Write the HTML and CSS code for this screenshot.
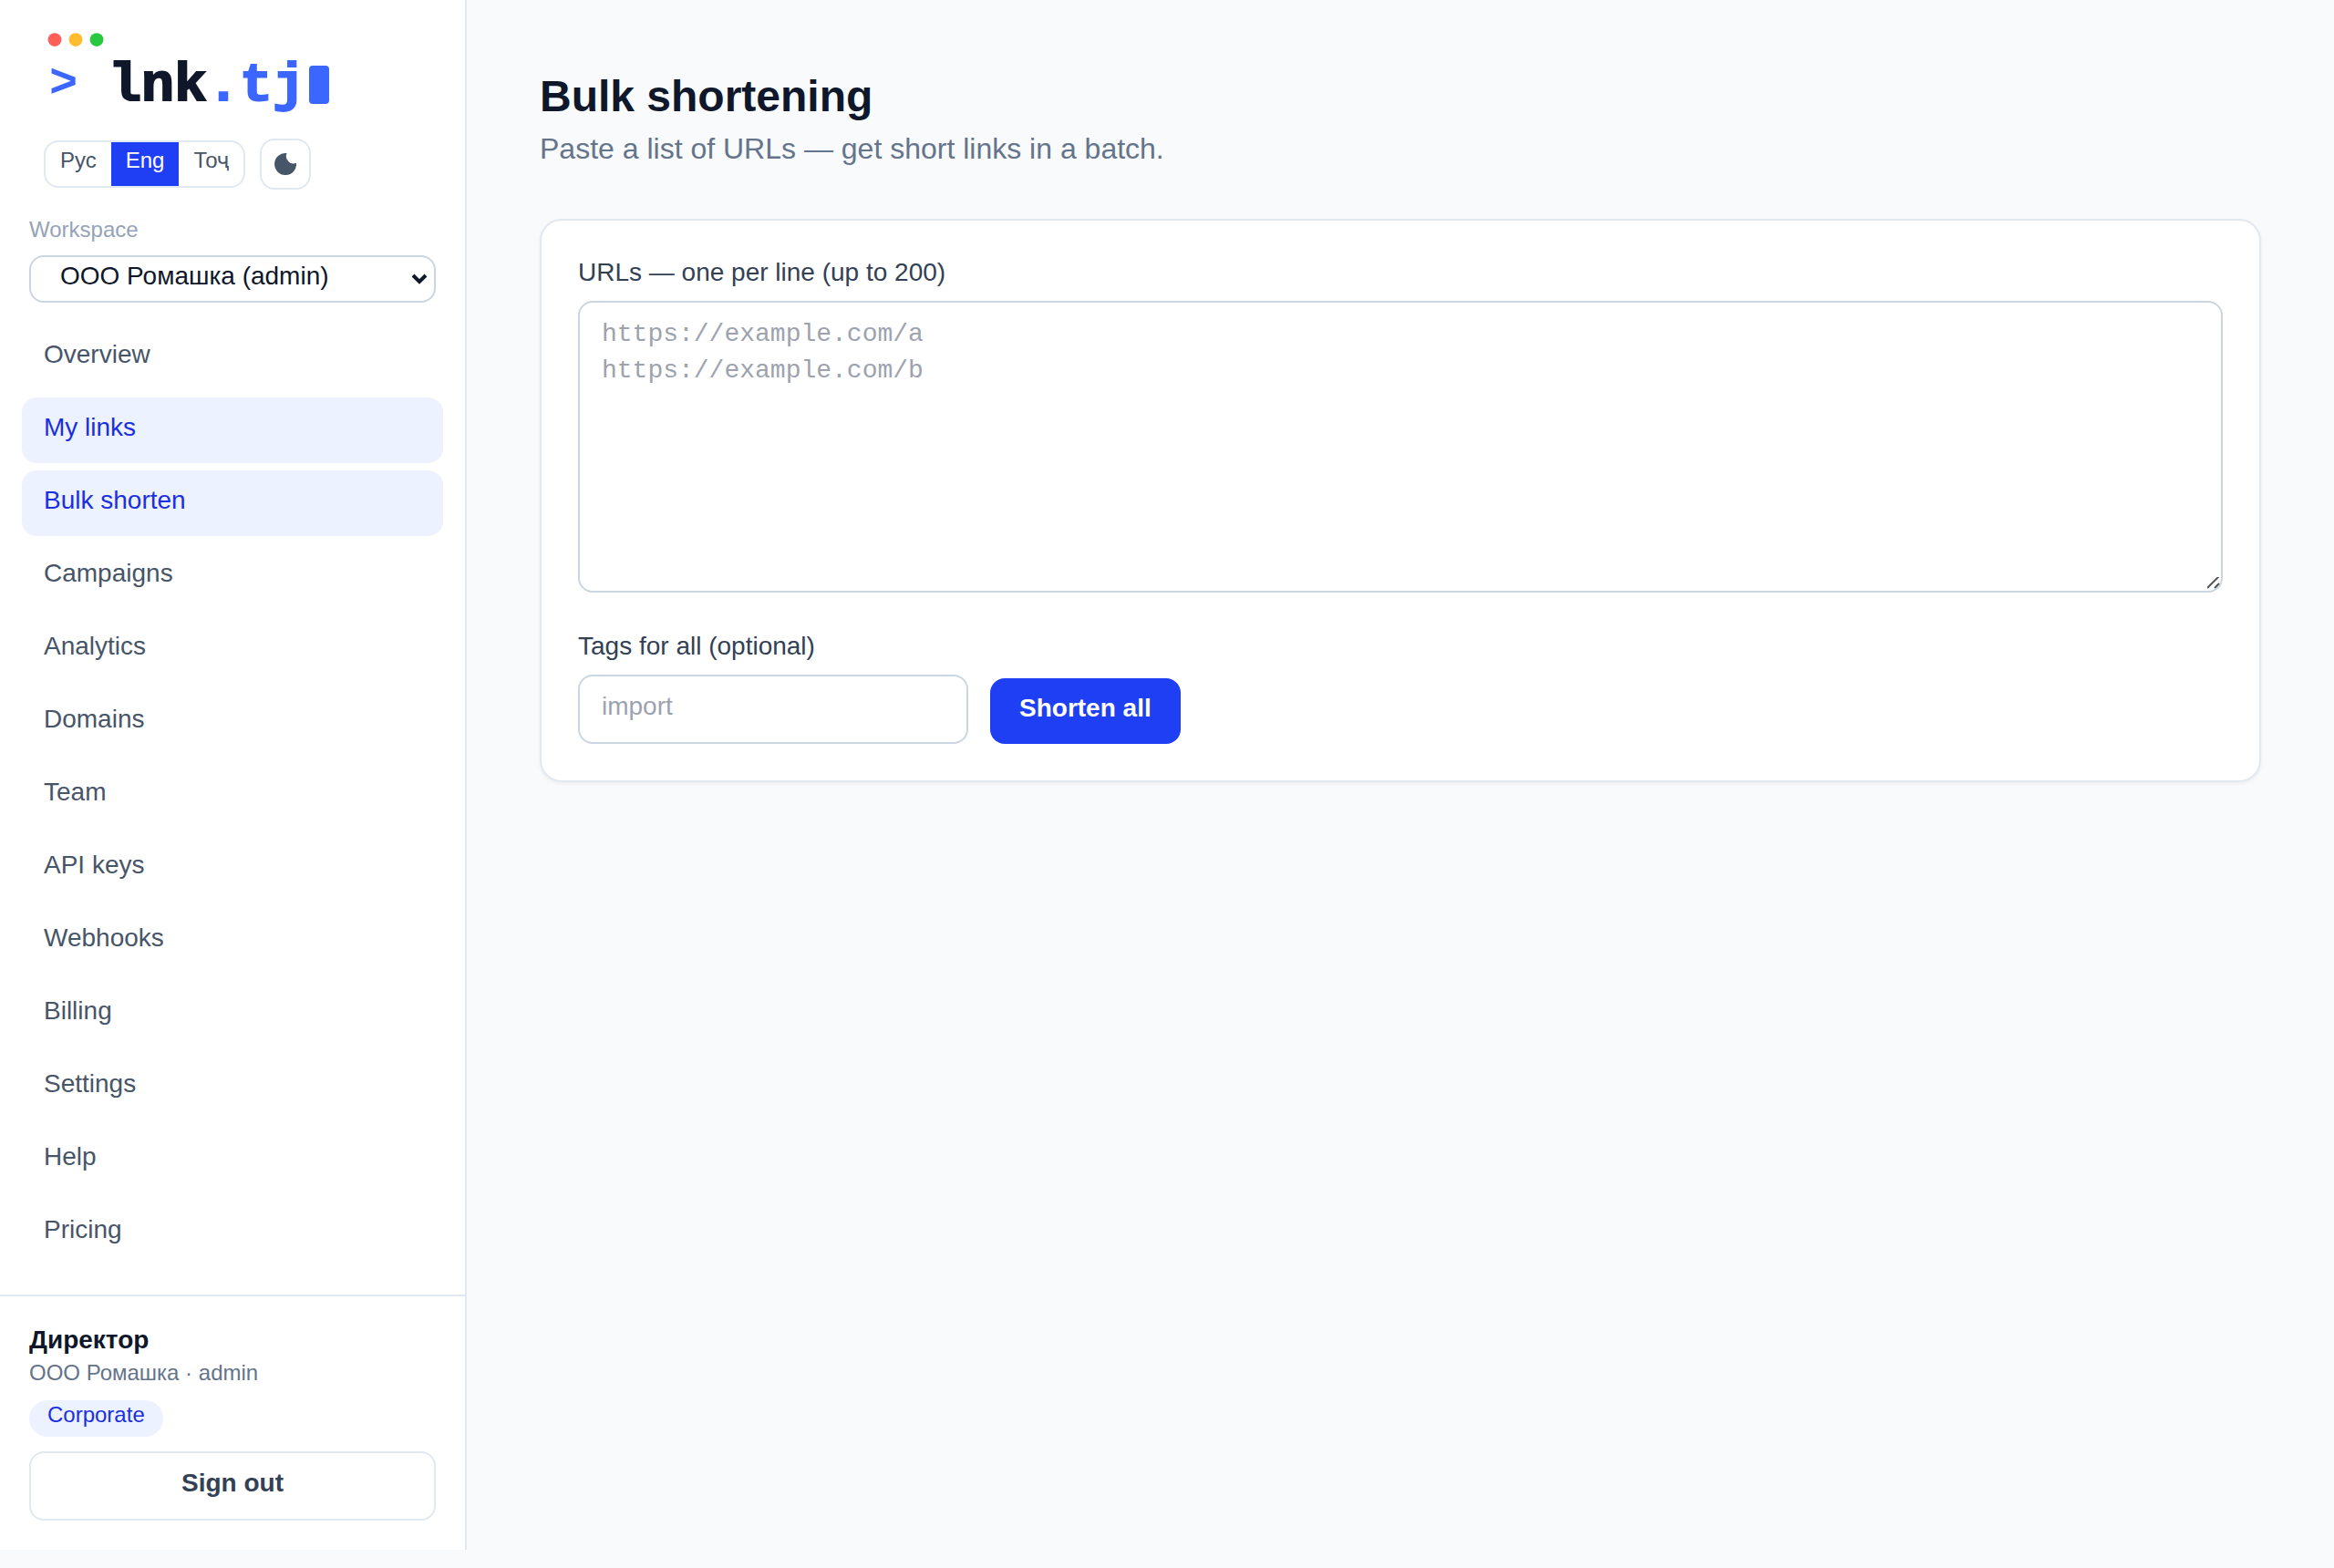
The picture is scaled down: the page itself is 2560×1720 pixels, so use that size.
FILE: index.html
```html
<!DOCTYPE html>
<html lang="en">
<head>
<meta charset="UTF-8">
<meta name="viewport" content="width=device-width, initial-scale=1">
<title>Bulk shortening - lnk.tj</title>
<link rel="stylesheet" href="styles.css">
</head>

<body>
<div class="layout">
    <aside class="sidebar">
        <div class="brand">
            <a class="logo" href="#" aria-label="lnk.tj">
                <svg width="320" height="100" viewBox="0 0 320 100">
                    <circle cx="12" cy="15.6" r="7.4" fill="#ff5f57"/>
                    <circle cx="35" cy="15.6" r="7.4" fill="#febc2e"/>
                    <circle cx="58" cy="15.6" r="7.4" fill="#28c840"/>
                    <text class="logo-prompt" x="6" y="78">&gt;</text>
                    <text class="logo-text" x="71" y="82">lnk<tspan class="logo-tld">.tj</tspan></text>
                    <rect x="291" y="44" width="22" height="42" rx="4" fill="#3b66ff"/>
                </svg>
            </a>
            <div class="tools">
                <div class="lang">
                    <a href="#">Рус</a>
                    <a class="active" href="#">Eng</a>
                    <a href="#">Тоҷ</a>
                </div>
                <button class="theme" type="button" aria-label="Toggle theme">
                    <svg width="24" height="24" viewBox="0 0 24 24" fill="currentColor">
                        <path d="M13.6 .1A12 12 0 1 0 24 10.7A8 8 0 0 1 13.6 .1z"/>
                    </svg>
                </button>
            </div>
        </div>

        <div class="workspace">
            <label for="workspace">Workspace</label>
            <select id="workspace">
                <option>ООО Ромашка (admin)</option>
            </select>
        </div>

        <nav class="nav">
            <a href="#">Overview</a>
            <a class="active" href="#">My links</a>
            <a class="active" href="#">Bulk shorten</a>
            <a href="#">Campaigns</a>
            <a href="#">Analytics</a>
            <a href="#">Domains</a>
            <a href="#">Team</a>
            <a href="#">API keys</a>
            <a href="#">Webhooks</a>
            <a href="#">Billing</a>
            <a href="#">Settings</a>
            <a href="#">Help</a>
            <a href="#">Pricing</a>
        </nav>

        <div class="account">
            <div class="account-name">Директор</div>
            <div class="account-org">ООО Ромашка · admin</div>
            <span class="badge">Corporate</span>
            <button class="btn btn-outline" type="button">Sign out</button>
        </div>
    </aside>

    <main class="main">
        <h1>Bulk shortening</h1>
        <p class="subtitle">Paste a list of URLs — get short links in a batch.</p>

        <form class="card">
            <label for="urls">URLs — one per line (up to 200)</label>
            <textarea id="urls" placeholder="https://example.com/a&#10;https://example.com/b"></textarea>
            <div class="form-row">
                <div class="field">
                    <label for="tags">Tags for all (optional)</label>
                    <input id="tags" type="text" placeholder="import">
                </div>
                <button class="btn btn-primary" type="button">Shorten all</button>
            </div>
        </form>
    </main>
</div>
</body>
</html>
```

FILE: styles.css
```css
* {
    box-sizing: border-box;
}

body {
    margin: 0;
    background: #f8fafc;
    color: #0f172a;
    font-family: "Liberation Sans", Arial, sans-serif;
    font-size: 28px;
    line-height: 40px;
}

a {
    color: inherit;
    text-decoration: none;
}

button, input, select, textarea {
    font: inherit;
    color: inherit;
}

.layout {
    display: flex;
    align-items: flex-start;
}

/* Sidebar */
.sidebar {
    flex: none;
    width: 512px;
    background: #fff;
    border-right: 2px solid #e2e8f0;
}

.brand {
    padding: 28px 48px 0;
}

.logo, .logo svg {
    display: block;
}

.logo-text, .logo-prompt {
    font-family: "Liberation Mono", "Courier New", monospace;
    font-weight: 700;
}

.logo-text {
    font-size: 60px;
    fill: #0f172a;
    stroke: #0f172a;
    stroke-width: 2px;
}

.logo-prompt {
    font-size: 52px;
}

.logo-prompt, .logo-tld {
    fill: #3b66ff;
}

.logo-tld {
    stroke: #3b66ff;
}

.tools {
    display: flex;
    align-items: center;
    gap: 16px;
    margin-top: 24px;
}

.lang {
    display: flex;
    overflow: hidden;
    border: 2px solid #e2e8f0;
    border-radius: 16px;
    font-size: 24px;
    line-height: 32px;
    color: #475569;
}

.lang a {
    padding: 4px 16px 12px;
}

.lang .active {
    background: #1f3ff5;
    color: #fff;
}

.theme {
    display: flex;
    align-items: center;
    justify-content: center;
    width: 56px;
    height: 56px;
    padding: 0;
    background: none;
    border: 2px solid #e2e8f0;
    border-radius: 16px;
    color: #475569;
}

.workspace {
    padding: 28px 32px 24px;
}

.workspace label {
    display: block;
    margin-bottom: 12px;
    font-size: 24px;
    line-height: 32px;
    color: #94a3b8;
}

.workspace select {
    display: block;
    appearance: none;
    width: 100%;
    padding: 1px 48px 7px 32px;
    border: 2px solid #cbd5e1;
    border-radius: 16px;
    background: #fff url("data:image/svg+xml,%3Csvg xmlns='http://www.w3.org/2000/svg' width='18' height='12' viewBox='0 0 18 12'%3E%3Cpath d='M2 2l7 7 7-7' fill='none' stroke='%230f172a' stroke-width='4'/%3E%3C/svg%3E") no-repeat right 7px center;
}

.nav {
    display: flex;
    flex-direction: column;
    gap: 8px;
    padding: 0 24px 32px;
    color: #475569;
}

.nav a {
    padding: 13px 24px 19px;
    border-radius: 16px;
}

.nav .active {
    background: #ecf2ff;
    color: #1b2fe1;
}

.account {
    display: flex;
    flex-direction: column;
    align-items: flex-start;
    padding: 28px 32px 32px;
    border-top: 2px solid #e2e8f0;
}

.account-name {
    font-weight: 700;
}

.account-org {
    font-size: 24px;
    line-height: 32px;
    color: #64748b;
}

.badge {
    margin: 14px 0 16px;
    padding: 0 20px 8px;
    border-radius: 20px;
    background: #ecf2ff;
    color: #1b2fe1;
    font-size: 24px;
    line-height: 32px;
}

.btn {
    padding: 13px 32px 19px;
    border: 0;
    border-radius: 16px;
    font-weight: 700;
}

.btn-outline {
    width: 100%;
    border: 2px solid #e2e8f0;
    background: #fff;
    color: #334155;
}

.btn-primary {
    background: #1f3ff5;
    color: #fff;
}

/* Content */
.main {
    flex: 1;
    min-width: 0;
    padding: 74px 80px;
}

h1 {
    margin: 0;
    font-size: 48px;
    line-height: 64px;
}

.subtitle {
    margin: 0 0 52px;
    font-size: 32px;
    line-height: 50px;
    color: #64748b;
}

.card {
    padding: 37px 40px 40px;
    background: #fff;
    border: 2px solid #e2e8f0;
    border-radius: 24px;
    box-shadow: 0 2px 4px rgba(15, 23, 42, 0.05);
}

.card label {
    display: block;
    margin-bottom: 11px;
    color: #334155;
}

.card textarea, .card input {
    display: block;
    width: 100%;
    border: 2px solid #cbd5e1;
    border-radius: 16px;
    background: #fff;
}

.card textarea {
    height: 320px;
    padding: 15px 24px;
    font-family: "Liberation Mono", "Courier New", monospace;
    resize: vertical;
}

.card textarea::-webkit-scrollbar {
    width: 20px;
    height: 20px;
}

.card textarea::-webkit-resizer {
    background: url("data:image/svg+xml,%3Csvg xmlns='http://www.w3.org/2000/svg' width='20' height='20' viewBox='0 0 20 20'%3E%3Cpath d='M5 17L18 4M13 17l5-5' fill='none' stroke='%23555' stroke-width='2'/%3E%3C/svg%3E") no-repeat right bottom;
}

.card input {
    padding: 13px 24px 19px;
}

::placeholder {
    color: #9ca3af;
    opacity: 1;
}

.form-row {
    display: flex;
    align-items: flex-end;
    gap: 24px;
    margin-top: 39px;
}

.field {
    width: 428px;
}
```
